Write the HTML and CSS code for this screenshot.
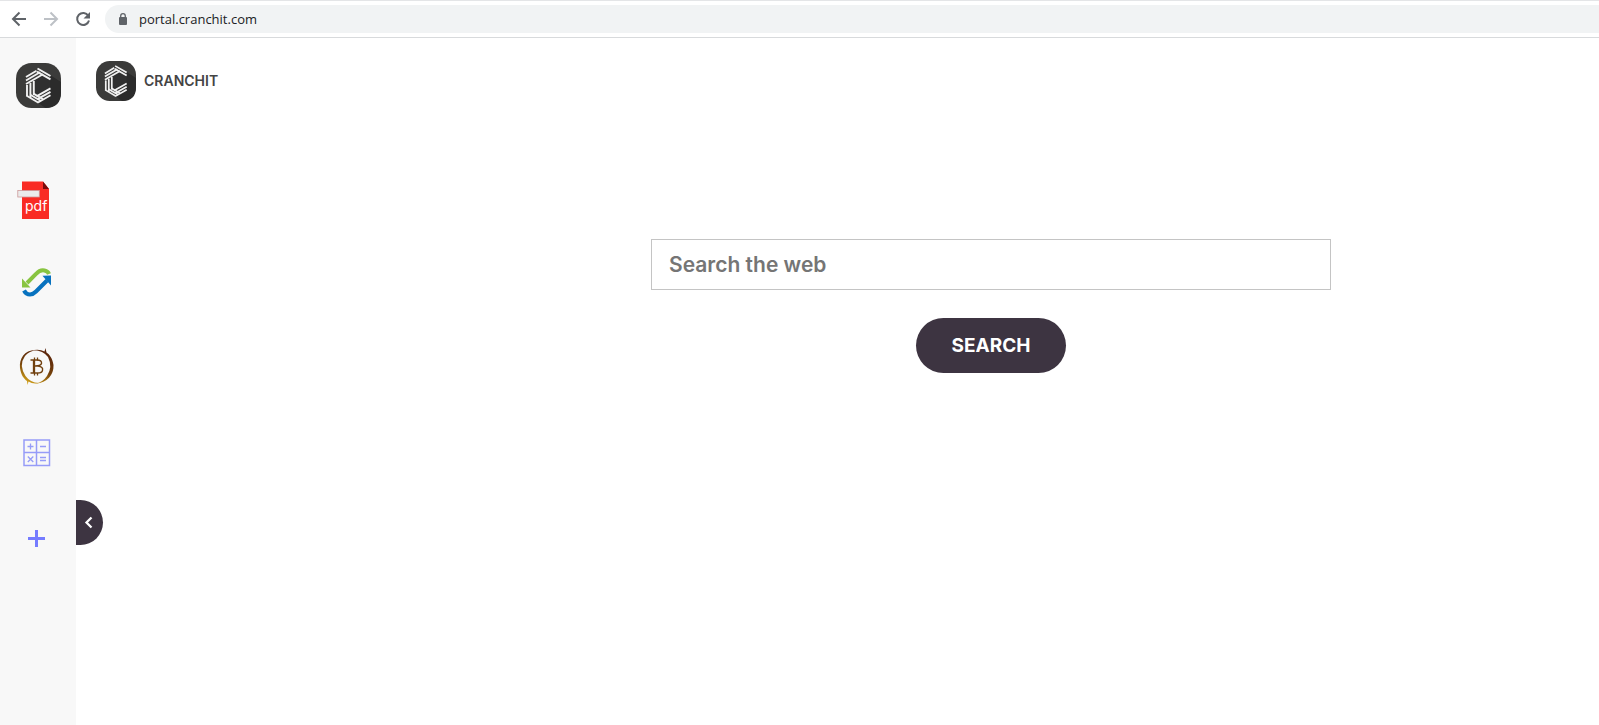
FILE: index.html
```html
<!DOCTYPE html>
<html lang="en">
<head>
<meta charset="utf-8">
<meta name="viewport" content="width=device-width, initial-scale=1">
<title>Cranchit</title>
<link rel="stylesheet" href="styles.css">
</head>
<body>
<svg width="0" height="0" class="defs" aria-hidden="true">
  <symbol id="logo" viewBox="0 0 45 45">
    <rect width="45" height="45" rx="15.500" fill="#3b3b3a"/>
    <path d="M34 12 45 19V29.500Q45 45 29.500 45L21 39 34 31Z" fill="#2b2b2b"/>
    <path d="M18 16 27 11 34 15V31L25 35 18 31Z" fill="#303030"/>
    <g fill="none" stroke="#f1f1f1" stroke-width="1.900">
      <path d="M10 14 20.500 7.700M10 17.500 24 9.300M10 21 27 11.200"/>
      <path d="M21.500 5.500 34.500 13M21 8.600 34.500 16.300"/>
      <path d="M11 22V33M14.400 20V35M17.800 18V32"/>
      <path d="M10.300 32.500 22.500 39.700M14.300 31.800 25 38M17.500 30.600 27 36.200"/>
      <path d="M22 39.500 34.500 32.300M21.500 36.200 34.500 28.900M20.500 33.300 34.500 25.400"/>
    </g>
  </symbol>
</svg>

<header class="toolbar">
  <button class="nav-button" aria-label="Back">
    <svg width="16" height="16" viewBox="0 0 16 16"><path d="M15 8H2.500M8.500 1.500 2 8l6.500 6.500" fill="none" stroke="#5f6368" stroke-width="2"/></svg>
  </button>
  <button class="nav-button" aria-label="Forward">
    <svg width="16" height="16" viewBox="0 0 16 16"><path d="M1 8h12.500M7.500 1.500 14 8l-6.500 6.500" fill="none" stroke="#bdc1c6" stroke-width="2"/></svg>
  </button>
  <button class="nav-button" aria-label="Reload">
    <svg width="16" height="16" viewBox="0 0 16 16"><path d="M13.300 4.800A6 6 0 1 0 14 9.500" fill="none" stroke="#5f6368" stroke-width="2"/><path d="M15 1v6.500H8.500Z" fill="#5f6368"/></svg>
  </button>
  <div class="address">
    <svg width="10" height="12" viewBox="0 0 10 12" aria-hidden="true"><rect x="1" y="4" width="8" height="8" rx="1" fill="#5f6368"/><path d="M2.700 4.500V3a2.300 2.300 0 0 1 4.600 0v1.500" fill="none" stroke="#5f6368" stroke-width="1.300"/></svg>
    <input class="address-input" type="text" aria-label="Address" value="portal.cranchit.com">
  </div>
</header>

<div class="portal">
  <aside class="sidebar">
    <a href="#" aria-label="Cranchit home"><svg class="side-logo" width="45" height="45"><use href="#logo"/></svg></a>
    <nav class="shortcuts">
      <a href="#" aria-label="PDF tool">
        <svg width="40" height="40" viewBox="0 0 40 40">
          <path d="M6 3.500H27L33 11V41H6Z" fill="#f92b24"/>
          <path d="M27 3.500 33 11H27Z" fill="#780b0b"/>
          <rect x="1.800" y="12.500" width="21.500" height="6.500" fill="#ebebeb" stroke="#c99" stroke-width=".8"/>
          <text x="9" y="33" class="pdf-text">pdf</text>
        </svg>
      </a>
      <a href="#" aria-label="Converter">
        <svg width="40" height="40" viewBox="0 0 40 40">
          <path d="M11 20 20 11Q24 6.500 28.500 7.500 32 8.300 33 11" fill="none" stroke="#88c440" stroke-width="4"/>
          <path d="M6 15.500 14.500 24.500H6Z" fill="#88c440"/>
          <path d="M8 27.500Q10 31.500 14 31.500 17 31.500 20 28.500L31 17.500" fill="none" stroke="#0872bf" stroke-width="4"/>
          <path d="M26.500 12.800 35 12.500V22.500Z" fill="#0872bf"/>
        </svg>
      </a>
      <a href="#" aria-label="Bitcoin">
        <svg width="40" height="40" viewBox="0 0 40 40">
          <defs><linearGradient id="gold" gradientUnits="userSpaceOnUse" x1="27" y1="0" x2="13" y2="36"><stop offset="0" stop-color="#57210b"/><stop offset=".55" stop-color="#73400b"/><stop offset="1" stop-color="#d4a31a"/></linearGradient></defs>
          <path d="M21 2C9 1 3 10 4 20 5 27 8 31 11 33L11.500 37 12.500 33.500Q17 36.500 23 35 14 34.500 9.500 28 2.500 17 9 8 13 3 21 2Z" fill="url(#gold)"/>
          <path d="M20 35.500C31 35 38 27 37.500 17 36.500 10 33 6 30.500 4.500L29.500 0 28.500 3.500Q24 1 18 2 27 2.500 32 9 37 19 31 28 27 34 20 35.500Z" fill="url(#gold)"/>
          <g fill="none" stroke="#70400f"><path d="M18 12v13" stroke-width="2.300"/><path d="M14.500 12H21Q26 12 25.500 15.500 24.800 18 19 18H22Q27.500 18.800 26.500 22.300 26 25.200 21 25H14.500" stroke-width="1.400"/><path d="M18.500 9.500v3M21.500 9.500v3M18.500 25v2.500M21.500 25v2.500" stroke-width="1.300"/></g>
        </svg>
      </a>
      <a href="#" aria-label="Calculator">
        <svg width="40" height="40" viewBox="0 0 40 40" fill="none" stroke="#969cf8">
          <path d="M8 7H33.500V32.500H8ZM20.500 7V32.500M8 19.500H33.500" stroke-width="1.500"/>
          <path d="M11.500 13.500h6M14.500 10.500v6M24 13.500h6M24 24.500h6M24 27.500h6M11.800 23.500l5.500 5.500M17.300 23.500l-5.500 5.500" stroke-width="1.300"/>
        </svg>
      </a>
      <button class="add" aria-label="Add shortcut">
        <svg width="40" height="40" viewBox="0 0 40 40"><path d="M12 20.500H29M20.500 12V29" stroke="#757cff" stroke-width="3"/></svg>
      </button>
    </nav>
    <button class="collapse" aria-label="Collapse sidebar">
      <svg width="10" height="12" viewBox="0 0 10 12"><path d="M6.500 .5 1.500 5.500l5 5" fill="none" stroke="#fff" stroke-width="2.300"/></svg>
    </button>
  </aside>

  <main class="content">
    <a class="brand" href="#"><svg width="40" height="40" aria-hidden="true"><use href="#logo"/></svg><span>CRANCHIT</span></a>
    <form class="search">
      <input class="search-input" type="text" placeholder="Search the web" aria-label="Search the web">
      <button class="search-button" type="button">SEARCH</button>
    </form>
  </main>
</div>
</body>
</html>
```
FILE: styles.css
```css
* {
  box-sizing: border-box;
}

body {
  margin: 0;
  min-height: 100vh;
  display: flex;
  flex-direction: column;
  background: #fff;
  font-family: Inter, "Open Sans", sans-serif;
}

svg {
  display: block;
  overflow: visible;
}

button {
  border: 0;
  padding: 0;
  background: none;
  cursor: pointer;
}

.defs {
  position: absolute;
}

.toolbar {
  display: flex;
  align-items: center;
  gap: 16px;
  padding: 4px 0 4px 11px;
  border-top: 1px solid #e4e5e7;
  border-bottom: 1px solid #d8dadc;
}

.address {
  flex: 1;
  display: flex;
  align-items: center;
  gap: 11px;
  height: 28px;
  margin-left: -2px;
  padding-left: 13px;
  border-radius: 14px 0 0 14px;
  background: #f1f3f4;
}

.address-input {
  flex: 1;
  border: 0;
  padding: 0;
  outline: 0;
  background: transparent;
  color: #202124;
  font: 13px/20px "Open Sans", sans-serif;
}

.portal {
  flex: 1;
  display: flex;
}

.sidebar {
  position: relative;
  width: 76px;
  padding: 25px 0 0 16px;
  background: #f8f8f8;
}

.shortcuts {
  display: flex;
  flex-direction: column;
  align-items: flex-start;
  gap: 45px;
  margin-top: 70px;
}

.pdf-text {
  fill: #fff;
  font: 400 14px Inter, sans-serif;
}

.collapse {
  position: absolute;
  top: 462px;
  left: 100%;
  display: flex;
  align-items: center;
  justify-content: center;
  width: 27px;
  height: 45px;
  border-radius: 0 23px 23px 0;
  background: #3d3441;
}

.content {
  flex: 1;
}

.brand {
  display: flex;
  align-items: center;
  gap: 8px;
  width: max-content;
  padding: 23px 0 0 20px;
  color: #444;
  font-size: 14px;
  font-weight: 600;
  line-height: 20px;
  text-decoration: none;
}

.search {
  display: grid;
  grid-template-columns: 575fr 680fr 268fr;
  row-gap: 28px;
  margin-top: 138px;
}

.search-input {
  grid-column: 2;
  width: 100%;
  height: 51px;
  padding: 0 17px;
  border: 1px solid #c4c4c4;
  border-radius: 0;
  background: #fff;
  color: #444;
  font: 600 21px/28px Inter, sans-serif;
}

.search-input::placeholder {
  color: #757575;
}

.search-button {
  grid-column: 2;
  justify-self: center;
  padding: 14px 36px 13px;
  border-radius: 28px;
  background: #3d3441;
  color: #fff;
  font: 700 19px/28px Inter, sans-serif;
}
```
